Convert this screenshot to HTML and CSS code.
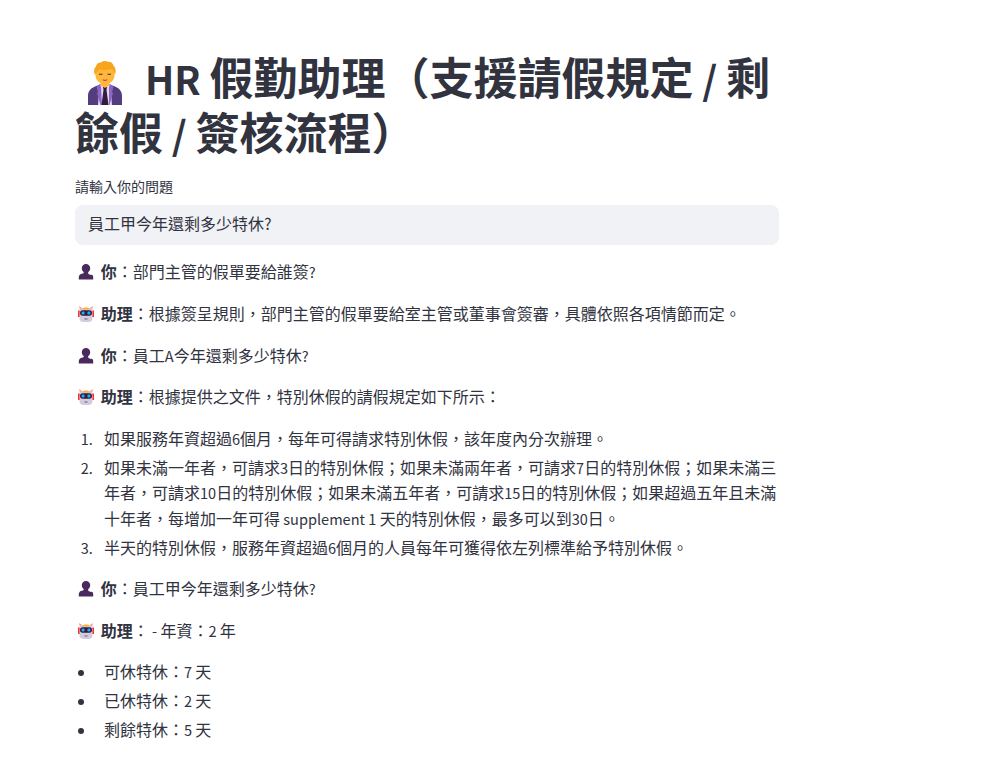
FILE: index.html
```html
<!DOCTYPE html>
<html lang="zh-Hant">
<head>
<meta charset="utf-8">
<title>HR 假勤助理</title>
<link rel="stylesheet" href="styles.css">
</head>
<body>
<svg class="defs" width="0" height="0" aria-hidden="true">
  <defs>
    <symbol id="user" viewBox="0 0 16 16">
      <path fill="#4a2a5e" d="M8 0c2.400 0 4.200 1.800 4.200 4.200 0 1.700-.8 3-2 3.900v1.100c0 .6.400.9.900 1.100l1.900.6C14.600 10.500 15.200 12 15.200 13.500V15.500H.8v-2C.8 12 1.400 10.500 3 10l1.900-.6c.5-.2.900-.5.900-1.100V8.100C4.600 7.200 3.800 5.900 3.800 4.200 3.800 1.800 5.600 0 8 0z"/>
    </symbol>
    <symbol id="robot" viewBox="0 0 16 16">
      <path fill="#f8312f" d="M0 4.500h2v6.500H0zM14 4.500h2v6.500h-2z"/>
      <path fill="#f4a6a6" d="M.8 0l3.600 2L2.200 4.500zM15.200 0l-3.600 2 2.200 2.500z"/>
      <rect x="1.500" y="2" width="13" height="14" rx="4" fill="#d4ccdc"/>
      <path fill="#ffb02e" d="M4.500 2.500C5.500 1 10.500 1 11.500 2.500L11 3.500H5z"/>
      <rect x="2" y="4.300" width="12" height="5.400" rx="2.700" fill="#321b41"/>
      <rect x="3.600" y="5.500" width="3" height="3" rx="1.300" fill="#1fb0ef"/>
      <rect x="9.400" y="5.500" width="3" height="3" rx="1.300" fill="#1fb0ef"/>
      <rect x="6.500" y="12.500" width="3" height="1" fill="#635994"/>
    </symbol>
  </defs>
</svg>
<main class="page">
  <h1 class="title">
    <svg class="title-emoji" viewBox="0 0 36 45" aria-hidden="true">
      <path fill="#533d7f" d="M1 45V36c0-5 3-8 7-9.500L13 24.500h10l5 2c4 1.500 7 4.500 7 9.500v9z"/>
      <path fill="#e1d8ec" d="M12.500 25h11L25 45H11z"/>
      <path fill="#8d65c5" d="M13 24l-3.500 3 1.500 5-1 1 3.500 12h1.500L14 27zM23 24l3.500 3-1.500 5 1 1-3.500 12H22l0-18z"/>
      <path fill="#321b41" d="M16 27h4l-.5 3 2 15h-7l2-15z"/>
      <path fill="#ffb73a" d="M13.500 21h9v4l-4.500 3-4.500-3z"/>
      <path fill="#ffb73a" d="M8.500 12c0-5 4-8.500 9.500-8.500s9.500 3.500 9.500 8.500v3c0 5.500-4 9-9.500 9s-9.500-3.500-9.500-9z"/>
      <path fill="#f8a41e" d="M8 15C6.500 11.500 7 8 9 6.500 9.500 3.500 12 2 14 2.500 15.500.5 19 .5 21 1.800c2.500-.3 5 1.200 5.300 3.700 2.500 2 3 5.800 1.700 9.500-.6-2.500-1.300-4.500-3-6-3 1.200-9.500 1.200-12.500.2C10.500 11 9 12.500 8 15z"/>
      <path fill="#402a32" d="M12 13.700h3.500v1H12zM20.500 13.700H24v1h-3.500z"/>
      <path d="M15.800 19.800c1.400.7 3 .7 4.400 0" stroke="#bb1d80" stroke-width="1" fill="none"/>
    </svg>
    <span class="lat">HR </span>假勤助理（支援請假規定<span class="lat"> / </span>剩餘假<span class="lat"> / </span>簽核流程）
  </h1>

  <label class="field-label" for="q">請輸入你的問題</label>
  <input class="field" id="q" type="text" value="員工甲今年還剩多少特休?">

  <p class="msg"><svg class="emoji"><use href="#user"/></svg><span class="lat"> </span><strong>你</strong>：部門主管的假單要給誰簽<span class="lat">?</span></p>
  <p class="msg"><svg class="emoji"><use href="#robot"/></svg><span class="lat"> </span><strong>助理</strong>：根據簽呈規則，部門主管的假單要給室主管或董事會簽審，具體依照各項情節而定。</p>
  <p class="msg"><svg class="emoji"><use href="#user"/></svg><span class="lat"> </span><strong>你</strong>：員工<span class="lat">A</span>今年還剩多少特休<span class="lat">?</span></p>
  <p class="msg"><svg class="emoji"><use href="#robot"/></svg><span class="lat"> </span><strong>助理</strong>：根據提供之文件，特別休假的請假規定如下所示：</p>
  <ol class="list">
    <li>如果服務年資超過<span class="lat">6</span>個月，每年可得請求特別休假，該年度內分次辦理。</li>
    <li>如果未滿一年者，可請求<span class="lat">3</span>日的特別休假；如果未滿兩年者，可請求<span class="lat">7</span>日的特別休假；如果未滿三年者，可請求<span class="lat">10</span>日的特別休假；如果未滿五年者，可請求<span class="lat">15</span>日的特別休假；如果超過五年且未滿十年者，每增加一年可得<span class="lat"> supplement 1 </span>天的特別休假，最多可以到<span class="lat">30</span>日。</li>
    <li>半天的特別休假，服務年資超過<span class="lat">6</span>個月的人員每年可獲得依左列標準給予特別休假。</li>
  </ol>
  <p class="msg"><svg class="emoji"><use href="#user"/></svg><span class="lat"> </span><strong>你</strong>：員工甲今年還剩多少特休<span class="lat">?</span></p>
  <p class="msg"><svg class="emoji"><use href="#robot"/></svg><span class="lat"> </span><strong>助理</strong>：<span class="lat"> - </span>年資：<span class="lat">2 </span>年</p>
  <ul class="list">
    <li>可休特休：<span class="lat">7 </span>天</li>
    <li>已休特休：<span class="lat">2 </span>天</li>
    <li>剩餘特休：<span class="lat">5 </span>天</li>
  </ul>
</main>
</body>
</html>
```
FILE: styles.css
```css
html, body {
  margin: 0;
  padding: 0;
  background: #fff;
}
body {
  color: #31333f;
  font-family: "Noto Sans CJK TC", "Noto Sans CJK SC", sans-serif;
  font-size: 16px;
  line-height: 1.6;
}
.defs {
  position: absolute;
}
.lat {
  font-size: 0.91em;
}
.title .lat {
  font-size: 0.88em;
}
.page {
  width: 704px;
  margin-left: 75px;
  padding-top: 30px;
}
.title {
  margin: 0;
  padding: 20px 0 15px;
  font-size: 44px;
  font-weight: 700;
  line-height: 53px;
}
.title-emoji {
  width: 36px;
  height: 45px;
  margin: 0 12px 0 12px;
  vertical-align: -10px;
}
.field-label {
  display: block;
  font-size: 14px;
  line-height: 22px;
  margin-bottom: 8px;
}
.field {
  display: block;
  box-sizing: border-box;
  width: 100%;
  height: 40px;
  margin: 0 0 14.4px;
  padding: 0 13px 4px;
  border: 0;
  border-radius: 8px;
  background: #f0f2f6;
  color: #31333f;
  font: inherit;
}
.msg {
  margin: 0 0 16px;
}
.emoji {
  display: inline-block;
  width: 16px;
  height: 16px;
  margin: 0 3.5px 0 3px;
  vertical-align: -2px;
}
.list {
  margin: 0 0 16px;
  padding: 0 0 0 21px;
}
.list li {
  margin: 3.2px 0;
  padding-left: 8px;
}
.list li::marker {
  font-size: 14.5px;
}
```
